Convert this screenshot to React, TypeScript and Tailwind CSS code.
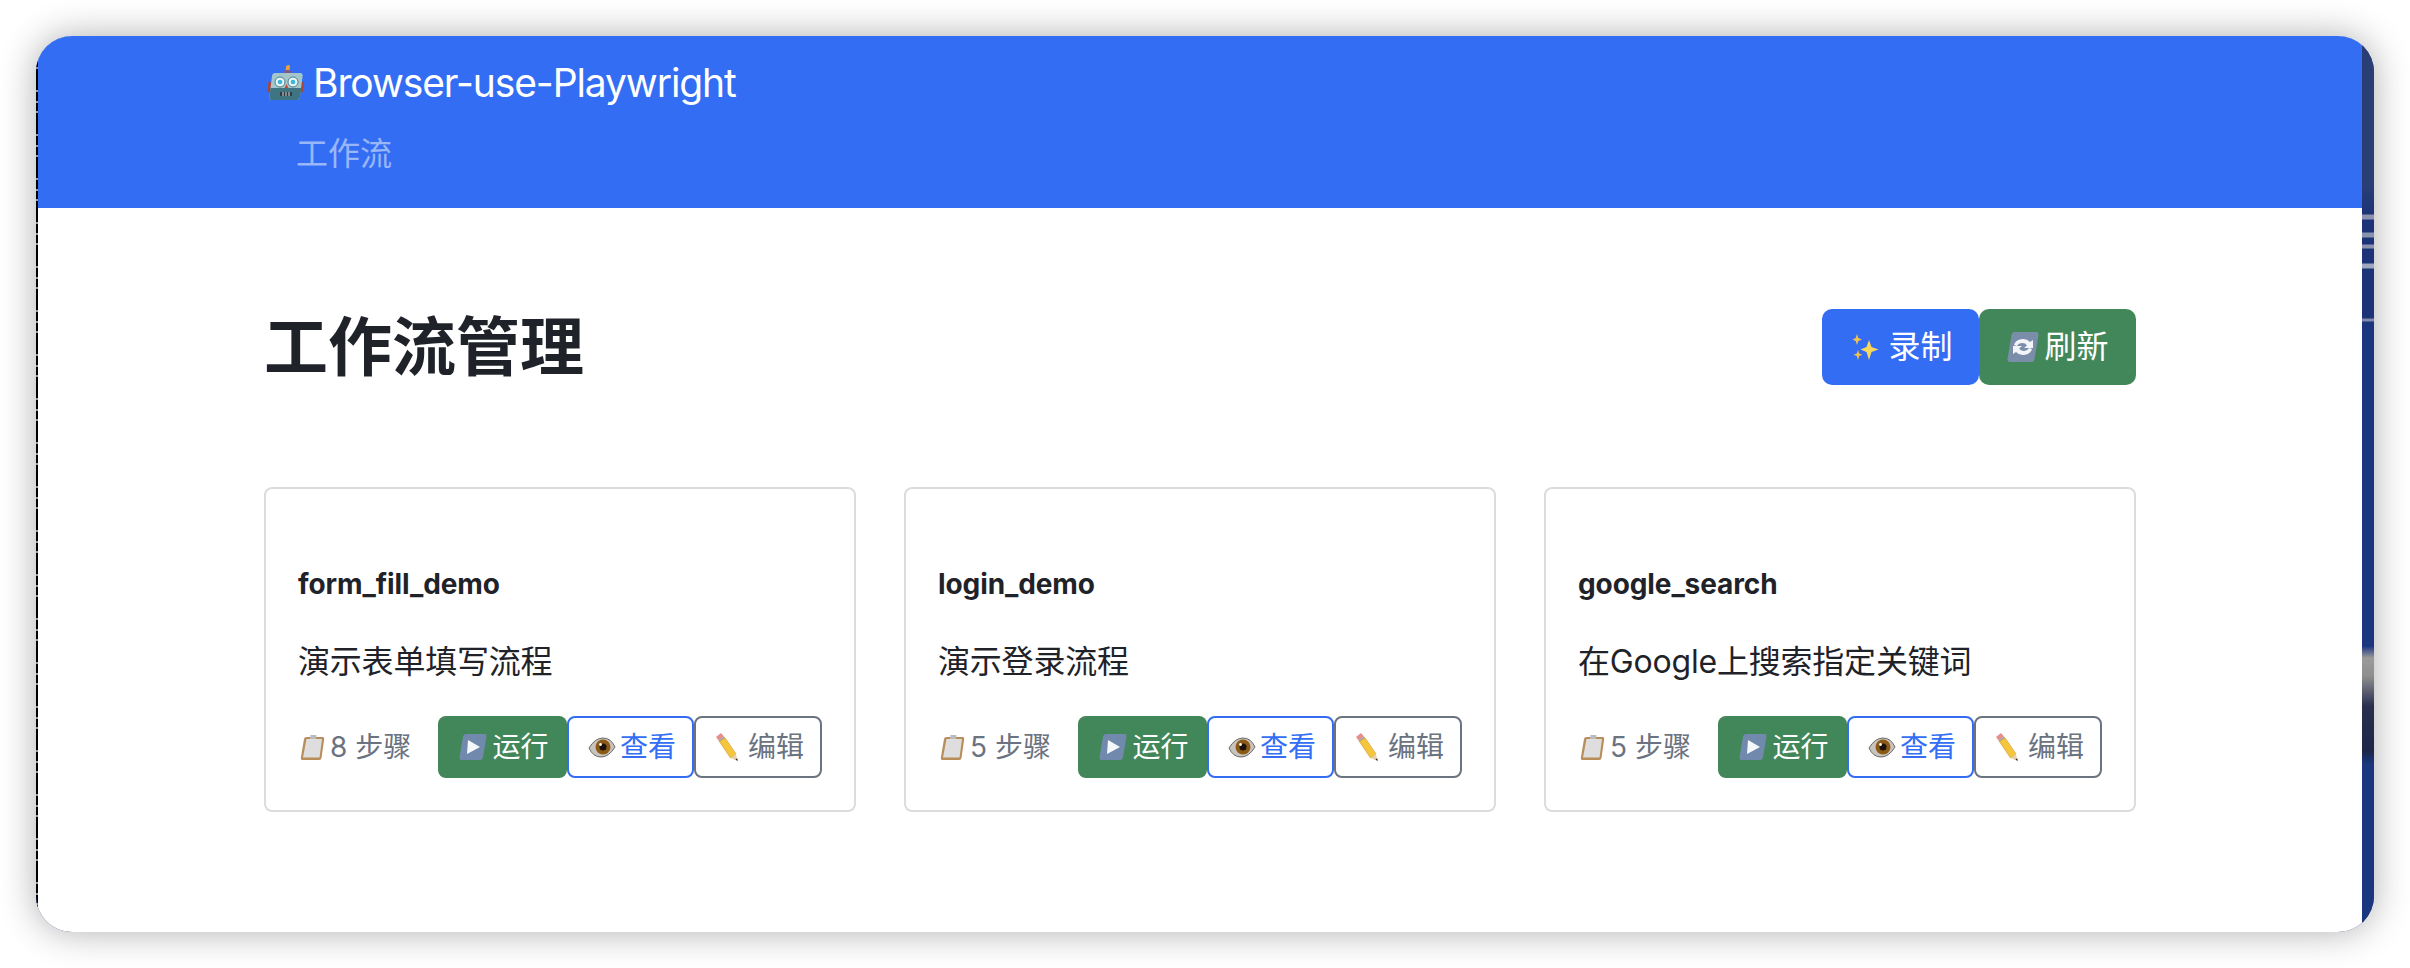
import { ReactNode } from 'react';

const RobotIcon = () => (
    <svg width="38" height="38" viewBox="0 0 38 38" className="ml-[1px] shrink-0">
        <path d="M21 1q2-.5 2 1.500l-.5 4h-4l.5-4q.2-1 2-1.500z" fill="#e8a23a" />
        <path d="M17 7q3.500-2 7 0v3h-7z" fill="#7a5a8c" />
        <path d="M1.500 18h4l-1 10H.5zM33 18h4l-1 10h-4z" fill="#a8453c" />
        <path d="M8 9h25q3 0 2.600 3l-2.600 21q-.4 3-3.400 3H5q-3 0-2.600-3L5 12q.4-3 3-3z" fill="#a3c6cb" />
        <path d="M3.500 24h31l-1.500 9q-.4 3-3.400 3H5q-3 0-2.600-3z" fill="#3f7482" />
        <circle cx="13" cy="18" r="5" fill="#e8f4f6" stroke="#4b7f8c" />
        <circle cx="26" cy="18" r="5" fill="#e8f4f6" stroke="#4b7f8c" />
        <circle cx="13" cy="18" r="2.300" fill="#39b6d8" />
        <circle cx="26" cy="18" r="2.300" fill="#39b6d8" />
        <path d="M19.500 20l2 4h-4z" fill="#c9473d" />
        <rect x="13" y="28" width="12" height="4" rx="1" fill="#2b3b40" />
        <path d="M16 28v4M19 28v4M22 28v4" stroke="#d5dde0" />
    </svg>
);

const SparklesIcon = () => (
    <svg width="28" height="28" viewBox="0 0 28 28" className="shrink-0">
        <path d="M17 7l2.500 7 7 2.500-7 2.500-2.500 8-2.500-8-6-2.500 6-2.500z" fill="#f9d65c" />
        <path d="M5 1l1.300 4 3.700 1.500-3.700 1.500-1.300 4-1.300-4L.500 6.500l3.200-1.500z" fill="#f2c14e" />
        <path d="M6 17l1.200 3.500 3.300 1.200-3.300 1.300L6 27l-1.200-4-3.300-1.300 3.300-1.200z" fill="#f2c14e" />
    </svg>
);

const RefreshIcon = () => (
    <svg width="34" height="32" viewBox="0 0 34 32" className="shrink-0">
        <path d="M9 1h21q3 0 2.500 3l-4 24q-.5 3-3.500 3H4q-3 0-2.500-3l4-24Q6 1 9 1z" fill="#7b8ea9" />
        <path d="M8 14a9 7.500 0 0 1 16-3l3-2v8h-9l3-2.500A5.500 4.500 0 0 0 11 15z" fill="#f2f5f8" />
        <path d="M26 18a9 7.500 0 0 1-16 3l-3 2v-8h9l-3 2.500A5.500 4.500 0 0 0 23 17z" fill="#f2f5f8" />
    </svg>
);

const PlayIcon = () => (
    <svg width="30" height="30" viewBox="0 0 30 30" className="shrink-0">
        <path d="M8 2h18q3 0 2.500 3l-3.500 20q-.5 3-3.500 3H4q-3 0-2.500-3L5 5q.5-3 3-3z" fill="#7189ad" />
        <path d="M10 8l12 7-13 7z" fill="#f6f8fb" />
    </svg>
);

const EyeIcon = () => (
    <svg width="28" height="22" viewBox="0 0 28 22" className="shrink-0">
        <path d="M1 12Q7 2 15 2t12 9q-6 10-14 10T1 12z" fill="#c9c3bd" stroke="#6d6761" />
        <circle cx="15" cy="11" r="7.500" fill="#8b5a17" />
        <circle cx="15" cy="11" r="3.500" fill="#1d1209" />
        <circle cx="12.500" cy="8.500" r="1.400" fill="#fff" />
    </svg>
);

const PencilIcon = () => (
    <svg width="24" height="30" viewBox="0 0 24 30" className="shrink-0">
        <path d="M1 5l5-4 3 3.500-5.500 4z" fill="#e58f8b" />
        <path d="M3.500 8.500L9 4.500l1 1.200-5.500 4z" fill="#9aa2a8" />
        <path d="M4.500 9.700l5.500-4L21 22l-5.500 4z" fill="#f5c63c" stroke="#c9962a" strokeWidth=".6" />
        <path d="M15.500 26L21 22l1.500 7z" fill="#e8cfa8" />
        <path d="M20.500 27.500l1.800-1.200.3 2.800z" fill="#222" />
    </svg>
);

const ClipboardIcon = () => (
    <svg width="27" height="28" viewBox="0 0 26 28" className="ml-[1px] shrink-0">
        <path d="M7 4h16q2 0 1.700 2L22 25q-.3 2-2.300 2H3q-2 0-1.700-2L4.500 6q.3-2 2.500-2z" fill="#b98d57" />
        <path d="M7 6h15.500L20 24.500H3.500z" fill="#dedede" />
        <path d="M11 2h6l-.5 4h-6z" fill="#b8bcc0" />
    </svg>
);

const BUTTON_SIZES = {
    lg: 'h-[76px] rounded-[10px] text-[32px]',
    sm: 'h-[62px] rounded-lg text-[28px]',
};

interface ActionButtonProps {
    icon: ReactNode;
    label: string;
    className: string;
    size?: 'lg' | 'sm';
}

const ActionButton = ({ icon, label, className, size = 'sm' }: ActionButtonProps) => (
    <button className={`flex items-center justify-center ${BUTTON_SIZES[size]} ${className}`}>
        {icon}
        <span>{label}</span>
    </button>
);

const WORKFLOWS = [
    { name: 'form_fill_demo', description: '演示表单填写流程', steps: 8 },
    { name: 'login_demo', description: '演示登录流程', steps: 5 },
    { name: 'google_search', description: '在Google上搜索指定关键词', steps: 5 },
];

const WorkflowCard = ({ name, description, steps }: (typeof WORKFLOWS)[number]) => (
    <div className="flex h-[325px] flex-col rounded-lg border-2 border-[#dcdcdc] bg-white px-[32px]">
        <h3 className="mt-[78px] text-[28px] leading-[34px] font-bold tracking-[-0.1px] text-[#1f2329]">{name}</h3>
        <p className="mt-[39px] text-[32px] leading-[44px] tracking-[-0.2px] text-[#1f2329]">{description}</p>
        <div className="mt-[32px] flex items-center justify-between">
            <span className="flex items-center gap-[4px] text-[28px] text-[#6b7280]">
                <ClipboardIcon />
                {steps} 步骤
            </span>
            <div className="flex">
                <ActionButton
                    icon={<PlayIcon />}
                    label="运行"
                    className="w-[129px] gap-[4px] bg-[#428759] pl-[2px] text-white"
                />
                <ActionButton
                    icon={<EyeIcon />}
                    label="查看"
                    className="w-[127px] gap-[4px] border-2 border-[#336df4] bg-white pl-[3px] text-[#336df4]"
                />
                <ActionButton
                    icon={<PencilIcon />}
                    label="编辑"
                    className="w-[128px] gap-[9px] border-2 border-[#6b7280] bg-white pl-[3px] text-[#6b7280]"
                />
            </div>
        </div>
    </div>
);

export default function App() {
    return (
        <div
            className="h-[968px] w-[2410px] overflow-hidden bg-white p-[36px]"
            style={{ fontFamily: 'Inter, "Noto Sans CJK SC", sans-serif' }}
        >
            <div className="flex h-[896px] overflow-hidden rounded-[36px] bg-[#1a367f] shadow-[0_0_36px_rgba(0,0,0,0.32)]">
                <div className="w-[2px] shrink-0 bg-[repeating-linear-gradient(180deg,#000_0,#000_10px,#999_10px,#999_12px,#000_12px,#000_21px,#999_21px,#999_23px,#000_23px,#000_31px,#999_31px,#999_33px,#000_33px,#000_44px)]" />
                <div className="min-w-0 flex-1 bg-white">
                    <header className="h-[172px] bg-[#336df4] pl-[228px] pt-[21px]">
                        <div className="flex h-[52px] items-center gap-[8px] text-[39px] tracking-[-1.1px] text-white">
                            <RobotIcon />
                            <span>Browser-use-Playwright</span>
                        </div>
                        <nav className="mt-[23px] pl-[30px] text-[32px] leading-[44px] text-white/50">工作流</nav>
                    </header>
                    <main className="px-[226px] pt-[101px]">
                        <div className="flex items-center justify-between">
                            <h1 className="text-[64px] leading-[76px] font-bold text-[#1f2329]">工作流管理</h1>
                            <div className="flex">
                                <ActionButton
                                    size="lg"
                                    icon={<SparklesIcon />}
                                    label="录制"
                                    className="w-[157px] gap-[8px] bg-[#336df4] pl-[4px] text-white"
                                />
                                <ActionButton
                                    size="lg"
                                    icon={<RefreshIcon />}
                                    label="刷新"
                                    className="w-[157px] gap-[4px] bg-[#428759] text-white"
                                />
                            </div>
                        </div>
                        <div className="mt-[102px] grid grid-cols-3 gap-[48px]">
                            {WORKFLOWS.map((workflow) => (
                                <WorkflowCard key={workflow.name} {...workflow} />
                            ))}
                        </div>
                    </main>
                </div>
                <div className="w-[12px] shrink-0 bg-[linear-gradient(180deg,#2a3d75_0,#2a3d75_150px,#1c3477_178px,#8a93ad_179px,#8a93ad_183px,#1c3477_184px,#1c3477_196px,#8a93ad_197px,#8a93ad_201px,#1c3477_202px,#1c3477_208px,#8a93ad_209px,#8a93ad_212px,#1c3477_213px,#1c3477_227px,#a0a8bd_228px,#a0a8bd_232px,#1c3477_233px,#1c3477_282px,#7f8aa8_283px,#7f8aa8_285px,#1a367f_286px,#1a367f_610px,#9a9a9a_622px,#8f8f8f_640px,#2a2f4f_670px,#1c2748_715px,#1a367f_728px,#1a367f_100%)]" />
            </div>
        </div>
    );
}
